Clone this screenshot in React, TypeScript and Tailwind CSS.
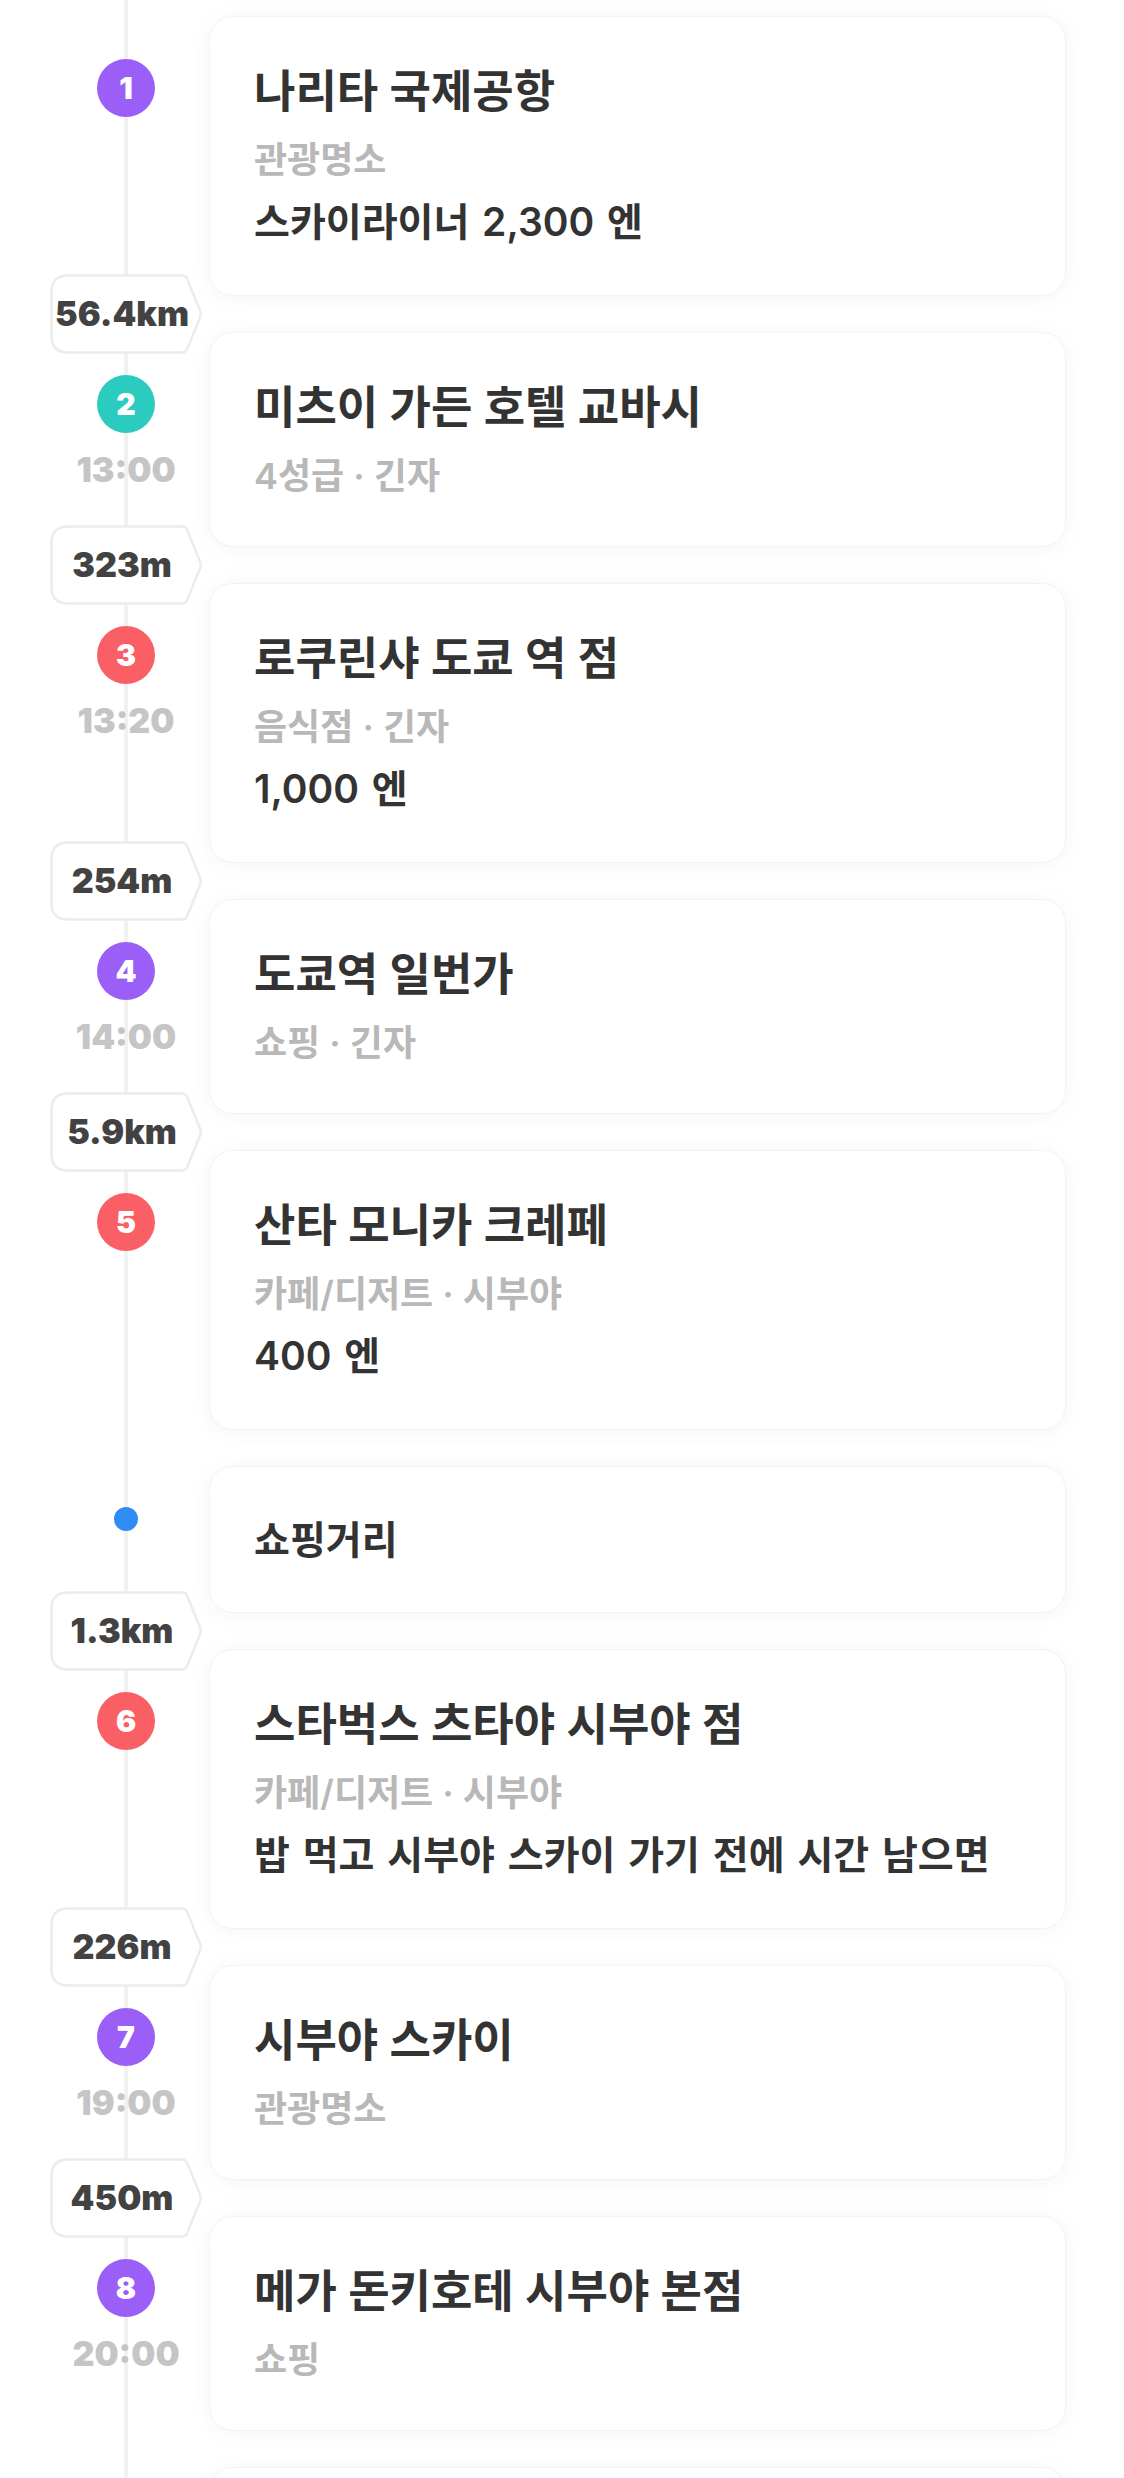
import React from "react";

type Stop = {
  kind: "num" | "dot" | "none";
  num?: number;
  color?: string;
  time?: string;
  title?: string;
  sub?: string;
  extra?: string;
  memo?: string;
  pillAfter?: string;
  partial?: boolean;
};

const stops: Stop[] = [
  { kind: "num", num: 1, color: "#9b5ef6", title: "나리타 국제공항", sub: "관광명소", extra: "스카이라이너 2,300 엔", pillAfter: "56.4km" },
  { kind: "num", num: 2, color: "#2ccbbf", time: "13:00", title: "미츠이 가든 호텔 교바시", sub: "4성급 · 긴자", pillAfter: "323m" },
  { kind: "num", num: 3, color: "#fa5f66", time: "13:20", title: "로쿠린샤 도쿄 역 점", sub: "음식점 · 긴자", extra: "1,000 엔", pillAfter: "254m" },
  { kind: "num", num: 4, color: "#9b5ef6", time: "14:00", title: "도쿄역 일번가", sub: "쇼핑 · 긴자", pillAfter: "5.9km" },
  { kind: "num", num: 5, color: "#fa5f66", title: "산타 모니카 크레페", sub: "카페/디저트 · 시부야", extra: "400 엔" },
  { kind: "dot", memo: "쇼핑거리", pillAfter: "1.3km" },
  { kind: "num", num: 6, color: "#fa5f66", title: "스타벅스 츠타야 시부야 점", sub: "카페/디저트 · 시부야", extra: "밥 먹고 시부야 스카이 가기 전에 시간 남으면", pillAfter: "226m" },
  { kind: "num", num: 7, color: "#9b5ef6", time: "19:00", title: "시부야 스카이", sub: "관광명소", pillAfter: "450m" },
  { kind: "num", num: 8, color: "#9b5ef6", time: "20:00", title: "메가 돈키호테 시부야 본점", sub: "쇼핑" },
  { kind: "none", partial: true },
];

function Pill({ label }: { label: string }) {
  return (
    <div className="relative w-[152px] h-[80px] shrink-0">
      <svg className="absolute inset-0" width="152" height="80" viewBox="0 0 152 80">
        <path
          d="M18 1.5 H132 Q135.5 1.5 137 4.5 L150 36.5 Q151.4 40 150 43.5 L137 75.5 Q135.5 78.5 132 78.5 H18 Q1.5 78.5 1.5 62 V18 Q1.5 1.5 18 1.5 Z"
          fill="#ffffff"
          stroke="#ececec"
          strokeWidth="2.5"
        />
      </svg>
      <div className="relative h-full flex items-center justify-center pr-[8px] text-[34px] font-black text-[#424242] leading-none">
        {label}
      </div>
    </div>
  );
}

function Marker({ s }: { s: Stop }) {
  if (s.kind === "none") return null;
  if (s.kind === "dot") {
    return <div className="w-[24px] h-[24px] -mt-[2px] rounded-full bg-[#2f8cf5]" />;
  }
  return (
    <>
      <div
        className="w-[58px] h-[58px] rounded-full flex items-center justify-center text-white text-[30px] font-black leading-none"
        style={{ backgroundColor: s.color }}
      >
        {s.num}
      </div>
      {s.time && (
        <div className="mt-[17px] h-[40px] leading-[40px] text-[34px] font-black text-[#c5c5c5]">
          {s.time}
        </div>
      )}
    </>
  );
}

function Card({ s }: { s: Stop }) {
  return (
    <div className="flex-1 rounded-[24px] bg-white border border-[#f3f3f3] shadow-[0_2px_22px_rgba(0,0,0,0.045)] px-[44px] py-[47px]">
      {s.memo ? (
        <div className="h-[51px] leading-[51px] text-[39px] font-semibold text-[#333333]">{s.memo}</div>
      ) : s.partial ? (
        <div className="h-[119px]" />
      ) : (
        <>
          <div className="h-[56px] leading-[56px] text-[45px] font-semibold text-[#333333] whitespace-nowrap">
            {s.title}
          </div>
          <div className="mt-[18px] h-[45px] leading-[45px] text-[36px] font-semibold text-[#b8b8b8] whitespace-nowrap">
            {s.sub}
          </div>
          {s.extra && (
            <div className="mt-[13px] h-[52px] leading-[52px] text-[39px] font-semibold text-[#333333] [word-spacing:3px] whitespace-nowrap">
              {s.extra}
            </div>
          )}
        </>
      )}
    </div>
  );
}

export default function App() {
  return (
    <div className="min-h-screen bg-white font-['Inter','Noto_Sans_CJK_KR',sans-serif]">
      <div className="pt-[16px] pr-[58px] pb-[200px] bg-[linear-gradient(to_right,transparent_124px,#f1f1f1_124px,#f1f1f1_128px,transparent_128px)]">
        {stops.map((s, i) => (
          <React.Fragment key={i}>
            <div className="flex">
              <div className="w-[209px] shrink-0 pl-[43px] pt-[43px] flex flex-col items-center">
                <Marker s={s} />
              </div>
              <Card s={s} />
            </div>
            {i < stops.length - 1 && (
              <div className="h-[36px] flex items-center">
                {s.pillAfter && (
                  <div className="w-[209px] shrink-0 pl-[43px] flex justify-center">
                    <Pill label={s.pillAfter} />
                  </div>
                )}
              </div>
            )}
          </React.Fragment>
        ))}
      </div>
    </div>
  );
}
